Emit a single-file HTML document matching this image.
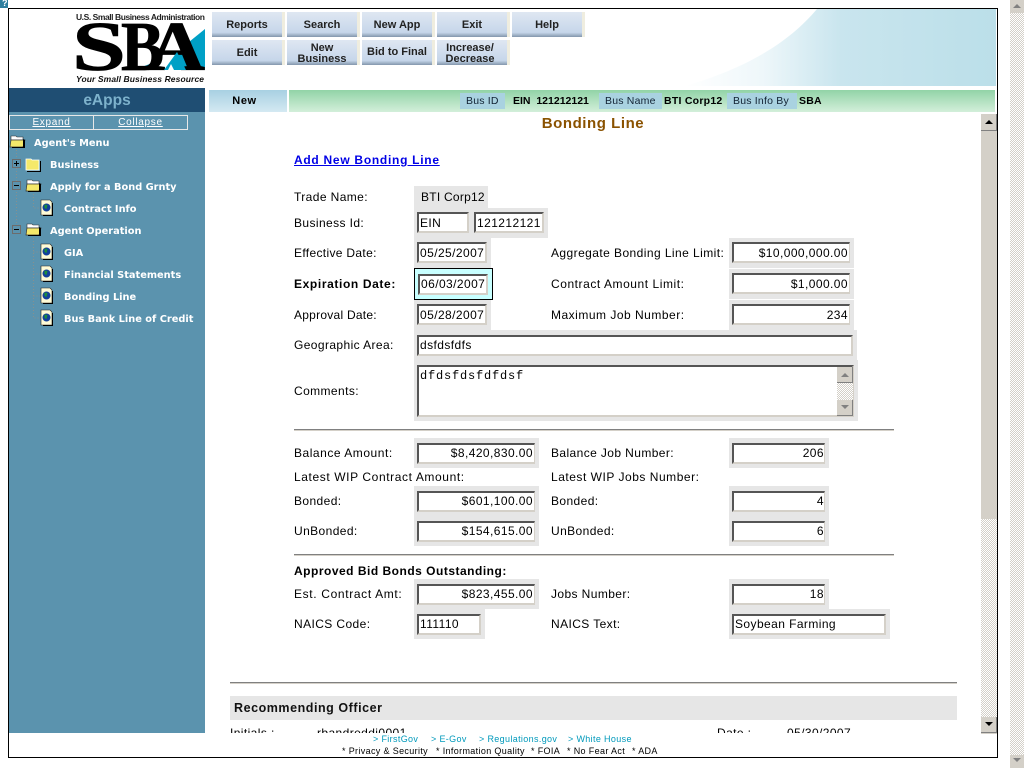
<!DOCTYPE html>
<html><head><meta charset="utf-8"><title>Bonding Line</title>
<style>
html,body{margin:0;padding:0;background:#fff;overflow:hidden}
#p{position:relative;width:1024px;height:768px;overflow:hidden;background:#fff;font-family:"Liberation Sans",Arial,sans-serif;font-size:12px;color:#000}
#p div,#p svg,#p a{position:absolute}
.t{white-space:nowrap;line-height:14px;letter-spacing:.4px}
.b{font-weight:bold}
.g{background:#e6e6e6}
.i{box-sizing:border-box;background:#fff;border:2px solid;border-color:#555 #d4d0c8 #d4d0c8 #555;height:21px;line-height:19px;white-space:nowrap;overflow:hidden;padding:0 1px;letter-spacing:.42px}
#p .u{line-height:17px}
.r{text-align:right;border-right-width:1px;padding-right:1px}
.n{padding-right:0}
.btn{box-sizing:border-box;width:70px;height:25px;background:linear-gradient(#dfe7f2,#c6d6ea 82%,#8296ac);text-align:center;font-weight:bold;font-size:11px;line-height:26px;color:#222;box-shadow:3px 0 0 #efeddf}
.btn.two{line-height:11px;padding-top:3px}
.tree{font-family:"DejaVu Sans",sans-serif;font-weight:bold;font-size:9.800px;color:#fff;white-space:nowrap;line-height:12px}
.chk{background-color:#fff;background-image:repeating-conic-gradient(#d4d0c8 0 25%,#fff 0 50%);background-size:2px 2px}
.sb{box-sizing:border-box;background:#d4d0c8;border-bottom:1px solid #808080;border-right:1px solid #808080}
.hr{height:1px;background:#808080;border-bottom:1px solid #d4d0c8}
.f{white-space:nowrap;font-size:9px;line-height:11px;letter-spacing:.35px}
</style></head><body><div id="p">

<div style="left:0;top:0;width:8px;height:8px;background:#2f7f9f"></div>
<div style="left:2px;top:-2px;color:#fff;font:bold 9px/10px 'Liberation Sans',sans-serif">?</div>

<!-- frame -->
<div style="left:8px;top:8px;width:988px;height:748px;border:1px solid #000"></div>

<!-- logo -->
<svg style="left:76px;top:10px" width="132" height="76" viewBox="0 0 132 76">
<text x="0" y="10" font-family="Liberation Sans" font-weight="bold" font-size="8.500" textLength="129" lengthAdjust="spacing" fill="#222">U.S. Small Business Administration</text>
<polygon points="129,19 129,60 92,60 108,36" fill="#00a0c6"/>
<polygon points="58,60 84,50 78,60" fill="#00a0c6"/>
<g font-family="Liberation Serif" font-weight="bold" font-size="70" fill="#000" stroke="#000" stroke-width=".8">
<text x="-4" y="60" textLength="54" lengthAdjust="spacingAndGlyphs">S</text>
<text x="45" y="60" textLength="43" lengthAdjust="spacingAndGlyphs">B</text>
<text x="72" y="60" textLength="57" lengthAdjust="spacingAndGlyphs">A</text>
</g>
<polygon points="129,19 129,52 120,33" fill="#00a0c6"/>
<polygon points="88,60 101,42 110,60" fill="#00a0c6"/>
<polygon points="92,60 95,54 98,60" fill="#fff"/>
<text x="0" y="72" font-family="Liberation Sans" font-weight="bold" font-style="italic" font-size="8.500" textLength="128" lengthAdjust="spacing" fill="#111">Your Small Business Resource</text>
</svg>

<!-- banner -->
<svg style="left:640px;top:9px" width="356" height="77" viewBox="0 0 356 77">
<defs><linearGradient id="bg" x1="0" x2="1" y1="0" y2="0"><stop offset="0" stop-color="#fff"/><stop offset=".25" stop-color="#eef7fa"/><stop offset=".5" stop-color="#c9e5ee"/><stop offset="1" stop-color="#bbdfe9"/></linearGradient></defs>
<path d="M356 0H177C150 32 110 58 45 77H356Z" fill="url(#bg)"/>
</svg>

<!-- buttons -->
<div class="btn" style="left:212px;top:12px">Reports</div>
<div class="btn" style="left:287px;top:12px">Search</div>
<div class="btn" style="left:362px;top:12px">New App</div>
<div class="btn" style="left:437px;top:12px">Exit</div>
<div class="btn" style="left:512px;top:12px">Help</div>
<div class="btn" style="left:212px;top:40px">Edit</div>
<div class="btn two" style="left:287px;top:40px">New<br>Business</div>
<div class="btn" style="left:362px;top:40px;line-height:24px">Bid to Final</div>
<div class="btn two" style="left:437px;top:40px;padding-right:4px">Increase/<br>Decrease</div>

<!-- sidebar -->
<div style="left:9px;top:88px;width:196px;height:24px;background:#1f4e73"></div>
<div class="b" style="left:9px;top:92px;width:196px;text-align:center;color:#7db2cc;font-size:15.500px;line-height:18px">eApps</div>
<div style="left:9px;top:112px;width:196px;height:621px;background:#5b93ae"></div>
<div style="left:9px;top:115px;width:179px;height:15px;box-sizing:border-box;border:1px solid #e8e8e8"></div>
<div style="left:93px;top:115px;width:1px;height:15px;background:#e8e8e8"></div>
<div class="t" style="left:10px;top:116px;width:83px;text-align:center;color:#fff;font-size:10px;line-height:14px;text-decoration:underline;letter-spacing:.7px">Expand</div>
<div class="t" style="left:94px;top:116px;width:93px;text-align:center;color:#fff;font-size:10px;line-height:14px;text-decoration:underline;letter-spacing:.7px">Collapse</div>

<!-- tree -->
<svg style="left:9px;top:130px" width="60" height="200" viewBox="9 130 60 200">
<defs>
<g id="fo"><path d="M1 1h5l1 1h6v3H1z" fill="#fff" stroke="#333" stroke-width=".6"/><path d="M1 5h14l-2 7H0z" fill="#f5e96a" stroke="#333" stroke-width=".7"/><path d="M13 4l2 1v8H2v-1h11z" fill="#000"/></g>
<g id="fc"><path d="M0 1h5l1 1h7v10H0z" fill="#f5e96a" stroke="#fff" stroke-width=".8"/><path d="M14 3v10H1v1h14V3z" fill="#000"/></g>
<g id="d"><path d="M0 0h9l2 2v13H0z" fill="#fffbd6" stroke="#222" stroke-width=".6"/><circle cx="5.500" cy="7.500" r="4" fill="#123f9a"/><path d="M3.500 4.500l3 .5-1 4-2-1z" fill="#1f8f3a"/><path d="M11 3h1v13H2v-1h9z" fill="#000"/></g>
</defs>
<g fill="none" stroke="#9a8f80" stroke-opacity=".7" stroke-dasharray="1 2"><path d="M16.500 150V231M33.500 194V208H41M33.500 238V318H41M33.500 252H41M33.500 274H41M33.500 296H41"/></g>
<g stroke="#6c6c6c" fill="#5b93ae"><rect x="12.500" y="159.500" width="8" height="8"/><rect x="12.500" y="181.500" width="8" height="8"/><rect x="12.500" y="225.500" width="8" height="8"/></g>
<path d="M14 163.500h5M16.500 161v5M14 185.500h5M14 229.500h5" stroke="#000"/>
<use href="#fo" x="10" y="135"/><use href="#fc" x="26" y="158"/><use href="#fo" x="26" y="179"/><use href="#fo" x="26" y="223"/>
<use href="#d" x="41" y="200"/><use href="#d" x="41" y="244"/><use href="#d" x="41" y="266"/><use href="#d" x="41" y="288"/><use href="#d" x="41" y="310"/>
</svg>
<div class="tree" style="left:34px;top:138px">Agent's Menu</div>
<div class="tree" style="left:50px;top:160px">Business</div>
<div class="tree" style="left:50px;top:182px">Apply for a Bond Grnty</div>
<div class="tree" style="left:64px;top:204px">Contract Info</div>
<div class="tree" style="left:50px;top:226px">Agent Operation</div>
<div class="tree" style="left:64px;top:248px">GIA</div>
<div class="tree" style="left:64px;top:270px">Financial Statements</div>
<div class="tree" style="left:64px;top:292px">Bonding Line</div>
<div class="tree" style="left:64px;top:314px">Bus Bank Line of Credit</div>

<!-- strip -->
<div style="left:209px;top:90px;width:78px;height:22px;background:linear-gradient(#a8d0e2,#d4e9f2)"></div>
<div class="b" style="left:209px;top:94px;width:71px;text-align:center;font-size:11px;line-height:14px;letter-spacing:.6px">New</div>
<div style="left:289px;top:90px;width:706px;height:22px;background:linear-gradient(#92d3a7,#d3efda)"></div>
<div style="left:460px;top:93px;width:45px;height:16px;background:#a9d2e0"></div>
<div style="left:599px;top:93px;width:63px;height:16px;background:#a9d2e0"></div>
<div style="left:727px;top:93px;width:70px;height:16px;background:#a9d2e0"></div>
<div class="t" style="left:466px;top:94px;font-size:10.500px;letter-spacing:.2px;color:#123">Bus ID</div>
<div class="t b" style="left:513px;top:94px;font-size:10.500px;letter-spacing:0">EIN&nbsp; 121212121</div>
<div class="t" style="left:605px;top:94px;font-size:10.500px;letter-spacing:.2px;color:#123">Bus Name</div>
<div class="t b" style="left:664px;top:94px;font-size:10.500px;letter-spacing:.25px">BTI Corp12</div>
<div class="t" style="left:733px;top:94px;font-size:10.500px;letter-spacing:.2px;color:#123">Bus Info By</div>
<div class="t b" style="left:799px;top:94px;font-size:10.500px;letter-spacing:.2px">SBA</div>

<!-- content -->
<div class="t b" style="left:205px;top:115px;width:776px;text-align:center;color:#8a5200;font-size:15px;line-height:18px;letter-spacing:.55px">Bonding Line</div>
<a class="t b" style="left:294px;top:153px;color:#0000e6;text-decoration:underline;letter-spacing:.72px">Add New Bonding Line</a>

<div class="t" style="left:294px;top:190px">Trade Name:</div>
<div class="g" style="left:414px;top:186px;width:74px;height:22px"></div>
<div class="t" style="left:421px;top:190px;letter-spacing:.25px">BTI Corp12</div>

<div class="t" style="left:294px;top:216px">Business Id:</div>
<div class="g" style="left:414px;top:208px;width:134px;height:30px"></div>
<div class="i" style="left:417px;top:212px;width:52px">EIN</div>
<div class="i" style="left:474px;top:212px;width:70px">121212121</div>

<div class="t" style="left:294px;top:246px;letter-spacing:.33px">Effective Date:</div>
<div class="g" style="left:414px;top:238px;width:77px;height:30px"></div>
<div class="i" style="left:417px;top:242px;width:70px">05/25/2007</div>

<div class="t b" style="left:294px;top:277px;letter-spacing:.62px">Expiration Date:</div>
<div style="left:414px;top:268px;width:77px;height:30px;background:#c8ffff;border:1px solid #000"></div>
<div class="i u" style="left:418px;top:274px;width:70px">06/03/2007</div>

<div class="t" style="left:294px;top:308px;letter-spacing:.25px">Approval Date:</div>
<div class="g" style="left:414px;top:300px;width:77px;height:30px"></div>
<div class="i" style="left:417px;top:304px;width:70px">05/28/2007</div>

<div class="t" style="left:551px;top:246px;letter-spacing:.43px">Aggregate Bonding Line Limit:</div>
<div class="g" style="left:729px;top:238px;width:125px;height:30px"></div>
<div class="i r" style="left:732px;top:242px;width:118px">$10,000,000.00</div>
<div class="t" style="left:551px;top:277px;letter-spacing:.55px">Contract Amount Limit:</div>
<div class="g" style="left:729px;top:269px;width:125px;height:30px"></div>
<div class="i r" style="left:732px;top:273px;width:118px">$1,000.00</div>
<div class="t" style="left:551px;top:308px;letter-spacing:.5px">Maximum Job Number:</div>
<div class="g" style="left:729px;top:300px;width:125px;height:30px"></div>
<div class="i r" style="left:732px;top:304px;width:118px">234</div>

<div class="t" style="left:294px;top:338px">Geographic Area:</div>
<div class="g" style="left:414px;top:330px;width:443px;height:30px"></div>
<div class="i u" style="left:417px;top:335px;width:436px">dsfdsfdfs</div>

<div class="t" style="left:294px;top:384px">Comments:</div>
<div class="g" style="left:414px;top:360px;width:444px;height:61px"></div>
<div class="i" style="left:417px;top:365px;width:437px;height:52px;font-family:'Liberation Mono',monospace;font-size:12px;line-height:19px;letter-spacing:.8px">dfdsfdsfdfdsf</div>
<div class="chk" style="left:837px;top:367px;width:16px;height:48px"></div>
<div class="sb" style="left:837px;top:367px;width:16px;height:16px"></div>
<div class="sb" style="left:837px;top:400px;width:16px;height:16px"></div>
<svg style="left:840px;top:372px" width="10" height="40"><path d="M5 1l4 4H1zM1 33h8l-4 4z" fill="#808080"/></svg>

<div class="hr" style="left:294px;top:429px;width:600px"></div>

<div class="t" style="left:294px;top:446px;letter-spacing:.53px">Balance Amount:</div>
<div class="g" style="left:414px;top:438px;width:125px;height:30px"></div>
<div class="i r u" style="left:417px;top:443px;width:118px">$8,420,830.00</div>
<div class="t" style="left:551px;top:446px">Balance Job Number:</div>
<div class="g" style="left:729px;top:438px;width:100px;height:30px"></div>
<div class="i r n u" style="left:732px;top:443px;width:93px">206</div>

<div class="t" style="left:294px;top:470px;letter-spacing:.6px">Latest WIP Contract Amount:</div>
<div class="t" style="left:551px;top:470px;letter-spacing:.52px">Latest WIP Jobs Number:</div>

<div class="t" style="left:294px;top:494px">Bonded:</div>
<div class="g" style="left:414px;top:486px;width:125px;height:60px"></div>
<div class="i r u" style="left:417px;top:491px;width:118px">$601,100.00</div>
<div class="t" style="left:551px;top:494px">Bonded:</div>
<div class="g" style="left:729px;top:486px;width:100px;height:60px"></div>
<div class="i r n u" style="left:732px;top:491px;width:93px">4</div>

<div class="t" style="left:294px;top:524px">UnBonded:</div>
<div class="i r u" style="left:417px;top:521px;width:118px">$154,615.00</div>
<div class="t" style="left:551px;top:524px">UnBonded:</div>
<div class="i r n u" style="left:732px;top:521px;width:93px">6</div>

<div class="hr" style="left:294px;top:554px;width:600px"></div>

<div class="t b" style="left:294px;top:564px;letter-spacing:.5px">Approved Bid Bonds Outstanding:</div>

<div class="t" style="left:294px;top:587px;letter-spacing:.65px">Est. Contract Amt:</div>
<div class="g" style="left:414px;top:579px;width:125px;height:30px"></div>
<div class="i r u" style="left:417px;top:584px;width:118px">$823,455.00</div>
<div class="t" style="left:551px;top:587px">Jobs Number:</div>
<div class="g" style="left:729px;top:579px;width:100px;height:30px"></div>
<div class="i r n u" style="left:732px;top:584px;width:93px">18</div>

<div class="t" style="left:294px;top:617px">NAICS Code:</div>
<div class="g" style="left:414px;top:609px;width:71px;height:30px"></div>
<div class="i u" style="left:417px;top:614px;width:64px">111110</div>
<div class="t" style="left:551px;top:617px">NAICS Text:</div>
<div class="g" style="left:729px;top:609px;width:161px;height:30px"></div>
<div class="i u" style="left:732px;top:614px;width:154px">Soybean Farming</div>

<div class="hr" style="left:230px;top:682px;width:727px"></div>
<div class="g" style="left:230px;top:696px;width:727px;height:24px"></div>
<div class="t b" style="left:234px;top:701px;font-size:12.500px;letter-spacing:.55px;color:#111">Recommending Officer</div>

<div style="left:205px;top:720px;width:776px;height:13px;overflow:hidden">
<div class="t" style="left:25px;top:6px">Initials :</div>
<div class="t" style="left:112px;top:6px">rbandreddi0001</div>
<div class="t" style="left:512px;top:6px">Date :</div>
<div class="t" style="left:582px;top:6px">05/30/2007</div>
</div>

<!-- inner scrollbar -->
<div style="left:981px;top:114px;width:16px;height:620px;background:#d4d0c8"></div>
<div class="chk" style="left:981px;top:519px;width:16px;height:198px"></div>
<div class="sb" style="left:981px;top:114px;width:16px;height:17px"></div>
<div class="sb" style="left:981px;top:717px;width:16px;height:16px"></div>
<svg style="left:984px;top:118px" width="10" height="610"><path d="M5 2l4 4H1zM1 604h8l-4 4z" fill="#000"/></svg>

<!-- footer -->
<div class="f" style="left:373px;top:734px;color:#0099bb">&gt; FirstGov</div>
<div class="f" style="left:431px;top:734px;color:#0099bb">&gt; E-Gov</div>
<div class="f" style="left:479px;top:734px;color:#0099bb">&gt; Regulations.gov</div>
<div class="f" style="left:568px;top:734px;color:#0099bb">&gt; White House</div>
<div class="f" style="left:342px;top:746px">* Privacy &amp; Security</div>
<div class="f" style="left:436px;top:746px">* Information Quality</div>
<div class="f" style="left:531px;top:746px">* FOIA</div>
<div class="f" style="left:567px;top:746px">* No Fear Act</div>
<div class="f" style="left:632px;top:746px">* ADA</div>

<!-- outer scrollbar -->
<div class="chk" style="left:1010px;top:0;width:14px;height:768px"></div>
<div style="left:1010px;top:0;width:14px;height:13px;background:#d4d0c8"></div>
<div style="left:1010px;top:755px;width:14px;height:13px;background:#d4d0c8"></div>
<svg style="left:1012px;top:3px" width="10" height="762"><path d="M5 1l4 4H1zM1 755h8l-4 4z" fill="#808080"/></svg>
</div></body></html>
